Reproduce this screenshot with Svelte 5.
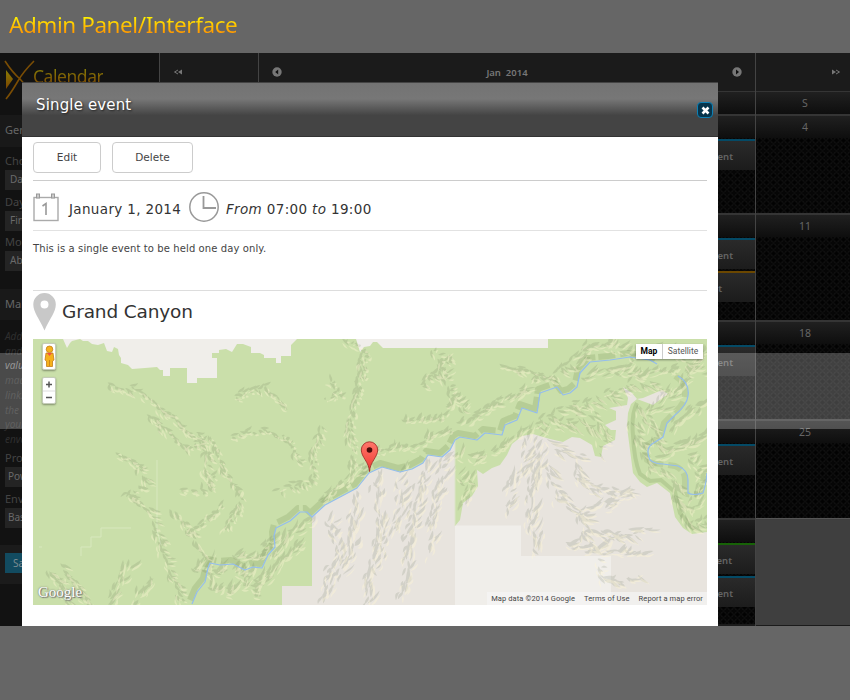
<script>
  const columnA = [
    { h: 23, head: true },
    { h: 99, events: [{ c: 'blue', t: 'event' }] },
    { h: 107, events: [{ c: 'blue', t: 'event' }, { c: 'orange', t: 'event', pad: 33 }] },
    { h: 99, events: [{ c: 'blue', t: 'event' }] },
    { h: 99, events: [{ c: 'blue', t: 'event' }] },
    { h: 106, events: [{ c: 'green', t: 'event', pad: 23 }, { c: 'blue', t: 'event' }] }
  ];
  const columnB = [
    { h: 23, head: true, n: 'S' },
    { h: 99, n: '4' },
    { h: 107, n: '11' },
    { h: 99, n: '18' },
    { h: 99, n: '25' }
  ];

  const river =
    'M192 604L197 592L205 582L208 568L210 563L220 565L233 564L245 570L253 567L262 568L268 555L275 547L274 536L276 528L290 521L300 512L307 512L312 517L325 505L342 496L357 488L369 473L382 467L400 472L412 469L423 463L428 455L442 457L450 450L455 440L460 437L477 440L485 433L502 435L505 425L517 420L522 408L537 413L540 393L557 387L563 395L570 393L577 387L580 373L590 362L610 360L630 357L650 360L657 364';
  const riverEast =
    'M678 376Q690 383 688 396Q687 405 675 415L667 423L663 437L652 444Q645 449 650 460Q655 464 663 464L678 466Q688 470 688 480V493Q693 496 703 493Q706 485 707 473';

  // Ridge spines: points, spur length, spur angle in degrees
  const ridges = [
    [[112, 384, 140, 390, 160, 405, 178, 425, 200, 436, 208, 450, 204, 470, 212, 488], 8, 40],
    [[115, 453, 140, 465, 146, 482, 128, 495, 150, 510, 160, 540, 172, 575, 182, 600], 8, 30],
    [[148, 415, 162, 426, 176, 440, 186, 448, 202, 442], 7, 60],
    [[212, 436, 224, 470, 240, 490, 238, 510, 225, 530], 6, 75],
    [[180, 490, 205, 490, 212, 475], 6, 20],
    [[172, 510, 190, 530, 205, 560], 9, 50],
    [[190, 532, 212, 514, 224, 506], 6, -30],
    [[233, 435, 262, 430, 290, 440, 300, 460], 5, 15],
    [[235, 395, 265, 387, 285, 405], 5, 50],
    [[322, 425, 314, 450, 312, 480, 280, 490], 6, 55],
    [[362, 360, 358, 390, 350, 430, 355, 465], 6, 70],
    [[325, 400, 340, 395, 330, 380], 4, -50],
    [[345, 340, 366, 352, 360, 380], 5, -40],
    [[47, 570, 60, 585, 68, 601], 10, 35],
    [[62, 566, 75, 580, 88, 602], 10, 40],
    [[108, 604, 122, 580, 130, 568], 13, -60],
    [[134, 602, 150, 580], 12, -60],
    [[190, 565, 215, 572, 240, 574, 265, 580], 15, -55],
    [[205, 592, 225, 590, 250, 590, 262, 597], 15, -60],
    [[272, 560, 284, 540, 310, 520], 13, -45],
    [[268, 580, 282, 560, 300, 545], 13, -50],
    [[232, 555, 255, 560, 272, 535], 11, -35],
    [[320, 502, 345, 482, 362, 470], 10, -50],
    [[330, 520, 340, 550, 328, 580, 325, 602], 11, -65],
    [[356, 500, 354, 540, 342, 575], 13, -70],
    [[375, 480, 382, 520, 373, 560, 368, 600], 14, -70],
    [[400, 476, 402, 500, 391, 530, 380, 560], 14, -65],
    [[425, 465, 415, 510, 408, 550, 404, 595], 14, -65],
    [[448, 455, 438, 490, 430, 525, 432, 555], 13, -60],
    [[405, 420, 440, 418, 455, 400, 470, 410], 9, -55],
    [[375, 450, 400, 450, 430, 438, 452, 430], 9, -45],
    [[420, 385, 440, 370, 452, 352], 8, 40],
    [[435, 350, 445, 375, 452, 398], 8, -35],
    [[503, 365, 520, 370, 550, 378, 570, 362], 9, 25],
    [[460, 425, 490, 405, 516, 396, 535, 380], 10, -25],
    [[462, 455, 475, 460, 500, 450, 525, 430], 12, -45],
    [[460, 475, 470, 485, 462, 505], 10, -65],
    [[535, 425, 560, 410, 590, 400, 612, 390], 14, 30],
    [[555, 425, 580, 420, 605, 430], 13, 40],
    [[600, 450, 603, 430, 590, 410], 10, 35],
    [[570, 365, 590, 345, 615, 345, 632, 355], 13, -30],
    [[585, 375, 615, 370, 640, 375, 672, 370], 13, -25],
    [[610, 395, 635, 380, 665, 388], 12, 30],
    [[650, 415, 670, 395, 690, 370, 705, 350], 14, -40],
    [[634, 420, 640, 440, 648, 465, 675, 478], 12, 45],
    [[640, 405, 652, 425, 658, 445], 13, 45],
    [[670, 430, 685, 418, 704, 405], 14, -45],
    [[660, 455, 685, 445, 704, 435], 14, -35],
    [[674, 482, 682, 505, 690, 526, 705, 515], 13, 35],
    [[690, 458, 700, 470, 694, 510], 12, -40],
    [[530, 440, 524, 465, 512, 490, 505, 510], 15, -60],
    [[540, 440, 535, 475, 530, 520, 540, 555], 15, -65],
    [[550, 443, 575, 455, 578, 475], 15, 35],
    [[550, 465, 556, 495, 580, 510, 590, 550], 14, 35],
    [[575, 475, 595, 490, 630, 488], 12, 25],
    [[575, 515, 605, 505, 630, 490], 13, -25],
    [[580, 530, 615, 535, 645, 530], 14, 15],
    [[565, 545, 595, 550, 640, 555], 13, -30],
    [[598, 560, 605, 580, 635, 577], 12, 25],
    [[655, 345, 680, 358, 700, 375], 14, -30]
  ];

  let seed = 41;
  function rnd() {
    seed = (seed * 16807) % 2147483647;
    return seed / 2147483647;
  }
  // A crescent-shaped slope from (x, y) along angle a
  function slope(x, y, len, a, w) {
    const dx = Math.cos(a) * len, dy = Math.sin(a) * len;
    const nx = -Math.sin(a), ny = Math.cos(a);
    const f = (v) => v.toFixed(1);
    const b = (rnd() - 0.5) * 4;
    const c = (rnd() - 0.5) * 4;
    const pt = (t, o) => `${f(x + dx * t + nx * o)} ${f(y + dy * t + ny * o)}`;
    return `M${f(x)} ${f(y)}C${pt(0.3, b + w)} ${pt(0.6, c + w)} ${pt(1, 0)}C${pt(0.6, c - w * 0.3)} ${pt(0.3, b - w * 0.3)} ${f(x)} ${f(y)}Z`;
  }
  let dark = '';
  let light = '';
  for (const [p, len, deg] of ridges) {
    for (let i = 0; i < p.length - 2; i += 2) {
      const x0 = p[i], y0 = p[i + 1], x1 = p[i + 2], y1 = p[i + 3];
      const d = Math.hypot(x1 - x0, y1 - y0);
      const along = Math.atan2(y1 - y0, x1 - x0);
      for (let s = 0; s < d; s += 5) {
        const spread = len * 0.6;
        const x = x0 + ((x1 - x0) * s) / d + (rnd() - 0.5) * spread;
        const y = y0 + ((y1 - y0) * s) / d + (rnd() - 0.5) * spread;
        const a = ((deg + (rnd() - 0.5) * 55) * Math.PI) / 180;
        const l = len * (0.5 + rnd() * 0.8);
        const w = 1.5 + rnd() * 2.2;
        dark += slope(x, y, l, a, w);
        light += slope(x + 2.5, y + 2.5, l * 0.9, a, w * 0.8);
        if (rnd() > 0.3) dark += slope(x - 2, y - 1, 9, along + (rnd() - 0.5), 2.6);
        if (rnd() > 0.5) light += slope(x - 2, y + 3, 8, along + (rnd() - 0.5), 1.8);
      }
    }
  }
</script>

<div class="page">
  <h1><span>Admin Panel/Interface</span></h1>

  <div class="stage">
    <aside>
      <div class="brand">
        <svg width="36" height="42" viewBox="0 0 36 42">
          <defs>
            <linearGradient id="gold" x1="0" y1="0" x2="0" y2="1">
              <stop offset="0" stop-color="#8a7c05" /><stop offset="1" stop-color="#7a4300" />
            </linearGradient>
          </defs>
          <path d="M6 12V31L13 21Z" fill="url(#gold)" />
          <path d="M5 3Q12 14 20 21Q28 29 33 41M34 3Q23 14 18 23Q11 35 6 41" fill="none" stroke="#7a4d04" stroke-width="1.6" />
        </svg>
        <span>Calendar</span>
      </div>
      <h3>General</h3>
      <div class="fields">
        <span class="lab">Choose</span><span class="sel ind">Day</span>
        <span class="lab">Day</span><span class="sel ind">First</span>
        <span class="lab">Month</span><span class="sel ind">Abbr</span>
      </div>
      <h3 class="second">Make</h3>
      <p>Add<br />and<br /><b>value</b><br />made<br />link.<br />the<br />your<br />envo</p>
      <div class="fields low">
        <span class="lab">Prod</span><span class="sel">Power</span>
        <span class="lab">Enva</span><span class="sel">Basic</span>
      </div>
      <div class="foot"><button>Save</button></div>
    </aside>

    <main>
      <nav>
        <div class="n1"><svg width="10" height="8" viewBox="0 0 10 8"><path d="M5 2L1.500 4L5 6" fill="none" stroke="#777" /><path d="M9 1.500V6.500L5 4Z" fill="#777" /></svg></div>
        <div class="n2">
          <svg width="10" height="10" viewBox="0 0 10 10"><circle cx="5" cy="5" r="4.7" fill="#777" /><path d="M6.2 2.5V7.5L3.2 5Z" fill="#111" /></svg>
          <span>Jan&nbsp; 2014</span>
          <svg width="10" height="10" viewBox="0 0 10 10"><circle cx="5" cy="5" r="4.7" fill="#777" /><path d="M4 2.5V7.5L7 5Z" fill="#111" /></svg>
        </div>
        <div class="n3"><svg width="10" height="8" viewBox="0 0 10 8"><path d="M1 1.500V6.500L5 4Z" fill="#777" /><path d="M5 2L8.500 4L5 6" fill="none" stroke="#777" /></svg></div>
      </nav>
      <div class="cols">
        <div class="col a">
          {#each columnA as c}
            <div class="cell" class:head={c.head} style="height:{c.h}px">
              <div class="num"></div>
              {#each c.events ?? [] as e}
                <div class="event {e.c}" style="padding-right:{e.pad ?? 22}px">{e.t}</div>
              {/each}
            </div>
          {/each}
        </div>
        <div class="col b">
          {#each columnB as c}
            <div class="cell" class:head={c.head} style="height:{c.h}px"><div class="num">{c.n}</div></div>
          {/each}
          <div class="void"></div>
        </div>
      </div>
    </main>

    <div class="band"></div>

    <section class="modal">
      <header>
        <h2>Single event</h2>
        <div class="close"><svg width="9" height="9" viewBox="0 0 9 9"><path d="M1.5 1.5L7.5 7.5M7.5 1.5L1.5 7.5" stroke="#fff" stroke-width="2.6" /></svg></div>
      </header>
      <div class="body">
        <div class="buttons"><button>Edit</button><button class="del">Delete</button></div>
        <div class="when">
          <svg width="26" height="29" viewBox="0 0 26 29" fill="none" stroke="#999">
            <rect x="1" y="4.5" width="24" height="23" stroke="#aaa" stroke-width="1.4" />
            <rect x="3.5" y="1" width="3" height="4" fill="#ccc" /><rect x="18.5" y="1" width="3" height="4" fill="#ccc" />
            <path d="M9.5 13L13 10.5V22" stroke-width="1.6" />
          </svg>
          <span class="date">January 1, 2014</span>
          <svg width="32" height="32" viewBox="0 0 32 32" fill="none" stroke="#999">
            <circle cx="16" cy="16" r="14.2" stroke-width="1.5" /><path d="M15.5 5V17H28" stroke-width="1.8" />
          </svg>
          <span class="time"><i>From</i> 07:00 <i>to</i> 19:00</span>
        </div>
        <div class="desc">This is a single event to be held one day only.</div>
        <div class="place">
          <svg width="24" height="38" viewBox="0 0 24 38"><path fill-rule="evenodd" d="M11.500 0A11.300 11.300 0 0 0 .3 11.500C.3 19 6 25 11.500 37.500C17 25 22.800 19 22.800 11.500A11.300 11.300 0 0 0 11.500 0ZM11.500 7.500A4 4 0 1 1 11.500 15.500A4 4 0 1 1 11.500 7.500Z" fill="#c8c8c8" /></svg>
          <span>Grand Canyon</span>
        </div>
        <div class="map">
          <svg class="terrain" width="674" height="266" viewBox="33 339 674 266">
            <rect x="33" y="339" width="674" height="266" fill="#cadfaa" />
            <g fill="#f0eeea">
              <path d="M63 339L67 348L70 343L72 341L80 339L83 341L88 341L92 344L98 345L104 343L107 351L112 352L114 347L118 349L119 355L121 358L121 363L128 365L132 369L145 368L157 367L160 370L163 370V376H170V368H187V383H197V378H217V358H212V353H219V350L226 349L232 352L237 344L243 344L251 347V353H260L264 355V358H276V363H281V356H291V345L297 339Z" />
              <path d="M356 339L358 345L360 352L364 347L370 346L373 342H377L383 348H548V339Z" />
            </g>
            <g fill="#e8e4de">
              <path d="M312 517L325 505L342 496L357 488L369 473L382 467L400 472L412 469L423 463L428 455L442 457L450 450L455 440V605H282V586H312Z" />
              <path d="M455 526L460 520L463 503L472 496L478 486L477 470L483 474L492 468L500 465L507 455L512 444L522 436L533 434L543 437L550 439L563 442L572 437L580 438L592 445L595 456L601 457L603 446L615 440L616 430L611 430L605 425L616 420L616 411L609 408L627 405L628 398L623 387L632 393L637 399L643 398L662 390L668 394L661 399L653 405L645 402L637 399L631 404L628 413L627 427L630 450L633 473L640 482L647 487L657 483L670 493L675 517L683 528L692 534L707 532V605H455Z" />
            </g>
            <path d="M455 525.500H521V556H611V605H455Z" fill="#f0eeea" />
            <path d="M455 440V526" stroke="#dce4c8" />
            <path d="M39 547H42M81 556V547H91V537H101V528H131M157 460V530L161 545" fill="none" stroke="#d8e8be" />
            <path d={river} transform="translate(-2 -4)" fill="none" stroke="#809b5d" stroke-opacity=".26" stroke-width="6" stroke-linejoin="round" stroke-dasharray="34 3 17 5 26 4" />
            <path d={riverEast} transform="translate(-3 0)" fill="none" stroke="#809b5d" stroke-opacity=".2" stroke-width="6" stroke-dasharray="25 5 14 4" />
            <path d="M637 403Q631 415 633 435Q634 460 640 474L650 481L661 480L675 492L680 513L694 530" fill="none" stroke="#809b5d" stroke-opacity=".26" stroke-width="4" />
            <path d={dark} fill="#58634a" fill-opacity=".15" />
            <path d={light} fill="#fff7d6" fill-opacity=".38" />
            <path d={river} fill="none" stroke="#94bdee" stroke-width="1.200" stroke-linejoin="round" />
            <path d={riverEast} fill="none" stroke="#94bdee" stroke-width="1.200" />
            <defs>
              <linearGradient id="pin" x1="0" y1="0" x2="0" y2="1"><stop offset="0" stop-color="#ff776b" /><stop offset="1" stop-color="#ef3a32" /></linearGradient>
            </defs>
            <path d="M369.500 471.500C369 462 361.300 457 361.300 450A8.200 8.200 0 0 1 377.700 450C377.700 457 370 462 369.500 471.500Z" fill="url(#pin)" stroke="#a3302a" stroke-width=".9" />
            <circle cx="369.500" cy="450" r="2.800" fill="#4c0d0b" />
          </svg>
          <div class="tools">
            <div class="peg"><svg width="11" height="23" viewBox="0 0 11 23" fill="#f6b11c" stroke="#c47e16" stroke-width=".8"><path d="M2 8H9L10 15L8.500 16V21.500H2.500V16L1 15Z" /><circle cx="5.500" cy="4.300" r="3.300" /><path d="M3 8L5.500 11L8 8Z" fill="#ef5144" stroke="none" /><path d="M5.500 15V21" /></svg></div>
            <div class="zoom">
              <svg width="12" height="26" viewBox="0 0 12 26"><path d="M3 6.500H9M6 3.500V9.500M3 19.500H9" stroke="#555" stroke-width="1.500" /><path d="M0 13H12" stroke="#ddd" /></svg>
            </div>
          </div>
          <div class="type"><b>Map</b><span>Satellite</span></div>
          <div class="google">Google</div>
          <div class="credits"><span>Map data ©2014 Google</span><span>Terms of Use</span><span>Report a map error</span></div>
        </div>
      </div>
    </section>
  </div>
</div>

<style>
  :global(body) { background: #666; overflow: hidden; }
  * { box-sizing: border-box; }
  .page { width: 850px; height: 700px; background: #666; overflow: hidden; font-family: 'Noto Sans', 'Open Sans', sans-serif; }
  h1 { margin: 0; height: 53px; padding: 9px 0 0 9px; font-size: 22.500px; line-height: 32px; font-weight: 400; white-space: nowrap; }
  h1 span { display: inline-block; background: linear-gradient(#fff200 25%, #ff9200 78%); -webkit-background-clip: text; background-clip: text; color: transparent; letter-spacing: -0.43px; }
  .stage { position: relative; display: flex; height: 573px; background: #3f3f3f; overflow: hidden; }

  aside { width: 159px; background: #121212; color: #444; font-size: 11px; flex: none; overflow: hidden; }
  .brand { height: 62px; display: flex; padding-top: 5px; }
  .brand span { margin: 5px 0 0 -3px; font-size: 17.500px; letter-spacing: -.45px; line-height: 26px; height: 26px; background: linear-gradient(#857a08 25%, #7b4800 80%); -webkit-background-clip: text; background-clip: text; color: transparent; }
  h3 { margin: 0; height: 32px; line-height: 30px; padding-left: 5px; background: #191919; color: #666; font-size: 11px; font-weight: 400; }
  .fields { padding: 6px 0 0 5px; height: 142px; }
  .fields span { display: block; }
  .lab { height: 17px; line-height: 15px; }
  .sel { height: 20px; line-height: 19px; margin-bottom: 3.500px; width: 140px; padding-left: 3px; background: #242424; color: #6a6a6a; font-size: 10px; }
  .sel.ind { padding-left: 5px; }
  h3.second { height: 31px; line-height: 29px; }
  p { margin: 0; padding: 9px 0 0 5px; height: 129px; font-style: italic; font-size: 10px; line-height: 14.700px; color: #2f2f2f; }
  p b { color: #777; font-weight: 400; }
  .fields.low { padding-top: 1px; height: 96px; }
  .foot { background: #1b1b1b; height: 39px; padding: 8px 5px; }
  .foot button { display: block; width: 60px; height: 20px; padding: 0 0 0 8px; text-align: left; border: 0; background: #124b60; color: #7c8b91; font: 10px 'Noto Sans', sans-serif; }

  main { flex: 1; background: #1b1b1b; }
  nav { display: flex; height: 38px; color: #777; }
  nav div { display: flex; align-items: center; border-left: 1px solid #444; }
  .n1 { width: 99px; padding-left: 13px; }
  .n2 { width: 497px; padding: 0 13px; justify-content: space-between; font-size: 9.500px; font-weight: 600; }
  .n2 span { padding-top: 1px; }
  .n2 svg { margin-top: -1px; }
  .n3 { width: 95px; justify-content: flex-end; padding-right: 9px; }
  .cols { display: flex; }
  .col { border-left: 1px solid #444; height: 535px; }
  .a { width: 596px; }
  .b { width: 95px; }
  .cell { border-top: 2px solid #353535; background-color: #060606; background-image: radial-gradient(circle, #020202 1px, transparent 1.500px), radial-gradient(circle, transparent 2px, #131313 2.500px, transparent 3.500px); background-size: 7px 7px; }
  .head { border-top-width: 1px; }
  .num { height: 22px; margin-bottom: 1px; line-height: 22px; font-size: 10.500px; color: #666; text-align: center; padding-left: 4px; background: linear-gradient(#202020, #0e0e0e); }
  .event { height: 31px; margin-bottom: 2px; border-top: 2px solid; background: linear-gradient(#2a2a2a, #1c1c1c); color: #646464; font-size: 9.500px; font-weight: 600; line-height: 31px; text-align: right; }
  .blue { border-color: #044a66; }
  .orange { border-color: #6b4700; }
  .green { border-color: #176207; }
  .void { height: 107px; background: #3f3f3f; border-top: 1px solid #555; }
  .band { position: absolute; left: 0; top: 300px; width: 850px; height: 76px; background: rgba(255, 255, 255, .24); }

  .modal { position: absolute; left: 22px; top: 29px; width: 696px; height: 544px; background: #fff; font-family: 'DejaVu Sans', sans-serif; color: #333; }
  header { height: 55px; display: flex; justify-content: space-between; padding: 13px 5px 0 14px; border-top: 1px solid #444; border-bottom: 1px solid #333; background: linear-gradient(#737373 0, #777 30%, #444 61%, #444 100%); }
  h2 { margin: 0; font-size: 15px; line-height: 19px; font-weight: 400; color: #fff; letter-spacing: .15px; text-shadow: 1px 1px 2px #222; }
  .close { width: 16px; height: 16px; margin-top: 6px; border: 1px solid #0d80b5; border-radius: 4px; background: #06344b; display: flex; align-items: center; justify-content: center; }
  .body { padding: 5px 11px 0 11px; }
  .buttons { height: 39px; border-bottom: 1px solid #ccc; display: flex; gap: 11px; }
  .buttons button { width: 68px; height: 31px; border: 1px solid #ccc; border-radius: 4px; background: #fff; color: #444; font: 10.500px 'DejaVu Sans', sans-serif; padding: 0 0 1px; }
  .buttons .del { width: 81px; }
  .when { height: 50px; display: flex; align-items: center; border-bottom: 1px solid #e2e2e2; padding-top: 6px; font-size: 13.500px; }
  .when svg { margin-top: -3px; flex: none; }
  .date { margin: 0 7px 0 10px; width: 112px; white-space: nowrap; letter-spacing: .35px; }
  .time { margin-left: 6px; white-space: nowrap; letter-spacing: .35px; }
  .desc { height: 60px; border-bottom: 1px solid #ddd; font-size: 10px; line-height: 14px; padding-top: 11px; color: #444; letter-spacing: .1px; }
  .place { height: 48px; display: flex; padding-top: 2px; font-size: 18.500px; }
  .place span { margin-left: 5px; line-height: 37px; white-space: nowrap; letter-spacing: -.15px; }
  .map { position: relative; width: 674px; height: 266px; overflow: hidden; }
  .terrain { display: block; }
  .tools { position: absolute; left: 9px; top: 4px; }
  .peg, .zoom { width: 14px; height: 27px; background: #fff; border: 1px solid #c5ccba; border-radius: 2px; box-shadow: 0 1px 2px rgba(0, 0, 0, .35); display: flex; justify-content: center; align-items: center; }
  .zoom { margin-top: 7px; }
  .type { position: absolute; right: 4px; top: 5px; height: 15px; display: flex; background: #fff; box-shadow: 0 1px 2px rgba(0, 0, 0, .4); font: 8.500px/15px Roboto, sans-serif; color: #555; }
  .type b { width: 27px; text-align: center; color: #000; border-right: 1px solid #ccc; }
  .type span { width: 40px; text-align: center; }
  .google { position: absolute; left: 5px; top: 244px; font: 15px/19px 'Liberation Serif', serif; color: #fff; text-shadow: 0 0 2px #666, 1px 1px 1px #777; }
  .credits { position: absolute; right: 0; bottom: 0; height: 13px; display: flex; background: rgba(245, 245, 245, .7); font: 7.500px/13px Roboto, sans-serif; color: #444; padding-right: 4px; gap: 9px; padding-left: 4px; white-space: nowrap; letter-spacing: .1px; }
</style>
